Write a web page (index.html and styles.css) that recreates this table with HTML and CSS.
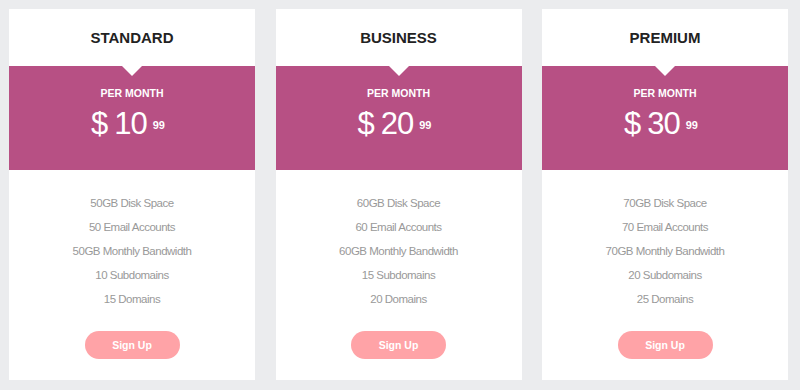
FILE: index.html
```html
<!DOCTYPE html>
<html>
<head>
<meta charset="utf-8">
<link rel="stylesheet" href="styles.css">
</head>
<body>
<div class="plans">
  <div class="card">
    <div class="head">STANDARD</div>
    <div class="band">
      <div class="per">PER MONTH</div>
      <div class="price"><span class="cur">$</span><span class="amt">10</span><span class="cents">99</span></div>
    </div>
    <ul class="features">
      <li>50GB Disk Space</li>
      <li>50 Email Accounts</li>
      <li>50GB Monthly Bandwidth</li>
      <li>10 Subdomains</li>
      <li>15 Domains</li>
    </ul>
    <div class="foot"><a class="btn">Sign Up</a></div>
  </div>
  <div class="card">
    <div class="head">BUSINESS</div>
    <div class="band">
      <div class="per">PER MONTH</div>
      <div class="price"><span class="cur">$</span><span class="amt">20</span><span class="cents">99</span></div>
    </div>
    <ul class="features">
      <li>60GB Disk Space</li>
      <li>60 Email Accounts</li>
      <li>60GB Monthly Bandwidth</li>
      <li>15 Subdomains</li>
      <li>20 Domains</li>
    </ul>
    <div class="foot"><a class="btn">Sign Up</a></div>
  </div>
  <div class="card">
    <div class="head">PREMIUM</div>
    <div class="band">
      <div class="per">PER MONTH</div>
      <div class="price"><span class="cur">$</span><span class="amt">30</span><span class="cents">99</span></div>
    </div>
    <ul class="features">
      <li>70GB Disk Space</li>
      <li>70 Email Accounts</li>
      <li>70GB Monthly Bandwidth</li>
      <li>20 Subdomains</li>
      <li>25 Domains</li>
    </ul>
    <div class="foot"><a class="btn">Sign Up</a></div>
  </div>
</div>
</body>
</html>
```
FILE: styles.css
```css
* { box-sizing: border-box; }
html, body { margin: 0; padding: 0; }
body {
  background: #ebecee;
  font-family: "Liberation Sans", Arial, sans-serif;
  width: 800px;
  height: 390px;
  overflow: hidden;
}
.plans {
  display: grid;
  grid-template-columns: 246px 246px 246px;
  column-gap: 20.5px;
  padding: 9px 12px 10px 9px;
}
.card {
  background: #fff;
  height: 371px;
  display: flex;
  flex-direction: column;
}
.head {
  height: 57px;
  display: flex;
  align-items: center;
  justify-content: center;
  font-size: 15px;
  font-weight: bold;
  color: #222;
  padding-bottom: 1px;
}
.band {
  position: relative;
  height: 104px;
  background: #b75084;
  color: #fff;
  text-align: center;
  padding-top: 21px;
}
.band::before {
  content: "";
  position: absolute;
  top: 0;
  left: 50%;
  margin-left: -10px;
  border-left: 10px solid transparent;
  border-right: 10px solid transparent;
  border-top: 10px solid #fff;
}
.per {
  font-size: 10.5px;
  font-weight: bold;
  line-height: 13px;
}
.price {
  display: flex;
  justify-content: center;
  align-items: flex-start;
  margin-top: 6px;
  padding-right: 8px;
}
.cur, .amt {
  font-size: 31px;
  line-height: 36px;
}
.cur { margin-right: 6px; }
.amt { letter-spacing: -1px; }
.cents {
  font-size: 11px;
  font-weight: bold;
  line-height: 13px;
  margin-left: 6px;
  margin-top: 13px;
}
.features {
  list-style: none;
  margin: 21px 0 0;
  padding: 0;
  text-align: center;
  font-size: 11.5px;
  letter-spacing: -0.5px;
  line-height: 24px;
  color: #999;
}
.foot {
  display: flex;
  justify-content: center;
  margin-top: 20px;
}
.btn {
  width: 95px;
  height: 28px;
  border-radius: 14px;
  background: #ffa3a7;
  color: #fff;
  font-size: 10.5px;
  font-weight: bold;
  display: flex;
  align-items: center;
  justify-content: center;
}
```
